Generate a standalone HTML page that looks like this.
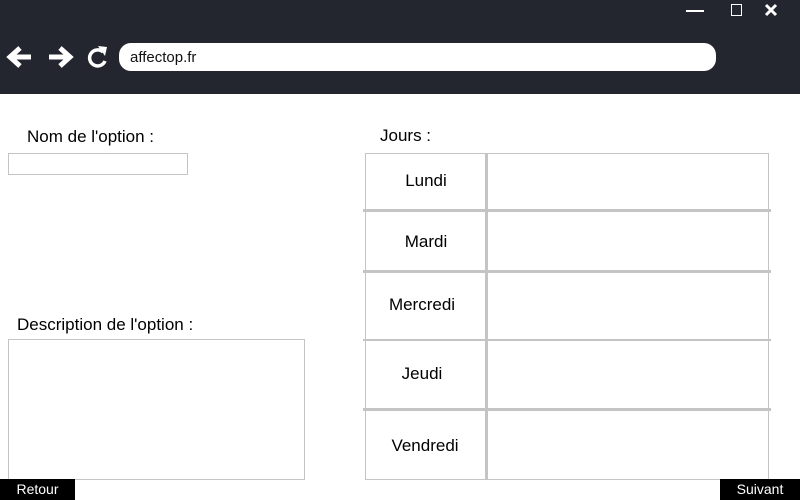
<!DOCTYPE html>
<html><head><style>
*{margin:0;padding:0;box-sizing:border-box}
body{width:800px;height:500px;position:relative;background:#fff;font-family:"Liberation Sans",sans-serif;overflow:hidden;color:#000}
.hd{position:absolute;left:0;top:0;width:800px;height:94px;background:#23262f}
.a{position:absolute}
.url{left:119px;top:43px;width:597px;height:28px;background:#fff;border-radius:12px;font-size:15px;line-height:30px;padding-left:11px;color:#111}
.lbl{font-size:17px}
.v{background:#c4c4c4}
.day{position:absolute;left:366px;width:120px;text-align:center;font-size:17px}
.btn{background:#000;color:#fff;font-size:14px;text-align:center;line-height:21px;height:21px;top:479px}
</style></head><body>
<div class="hd">
 <div class="a" style="left:686px;top:10px;width:18px;height:2px;background:#fff"></div>
 <div class="a" style="left:731px;top:4px;width:11px;height:12px;border:1.5px solid #fff"></div>
 <svg class="a" style="left:764px;top:3px" width="14" height="14"><path d="M2 2L12 12M12 2L2 12" stroke="#fff" stroke-width="3"/></svg>
 <svg class="a" style="left:5px;top:44px" width="30" height="26"><path d="M26 13H8M15 4L5 13L15 22" stroke="#fff" stroke-width="5" fill="none"/></svg>
 <svg class="a" style="left:45px;top:44px" width="30" height="26"><path d="M4 13H22M15 4L25 13L15 22" stroke="#fff" stroke-width="5" fill="none"/></svg>
 <svg class="a" style="left:86px;top:43px" width="24" height="28"><path d="M17 9A8 8 0 1 0 19 18" stroke="#fff" stroke-width="3.5" fill="none"/><path d="M12 3L21 4L19 13Z" fill="#fff"/></svg>
 <div class="a url">affectop.fr</div>
</div>
<div class="a lbl" style="left:27px;top:127px">Nom de l'option :</div>
<div class="a" style="left:8px;top:153px;width:180px;height:22px;border:1px solid #c4c4c4"></div>
<div class="a lbl" style="left:17px;top:315px">Description de l'option :</div>
<div class="a" style="left:8px;top:339px;width:297px;height:141px;border:1px solid #c4c4c4"></div>
<div class="a lbl" style="left:380px;top:126px">Jours :</div>
<div class="a" style="left:365px;top:153px;width:404px;height:327px;border:1px solid #c4c4c4"></div>
<div class="a v" style="left:485px;top:153px;width:3px;height:327px"></div>
<div class="a v" style="left:363px;top:209px;width:408px;height:3px"></div>
<div class="a v" style="left:363px;top:270px;width:408px;height:3px"></div>
<div class="a v" style="left:363px;top:339px;width:408px;height:2px"></div>
<div class="a v" style="left:363px;top:408px;width:408px;height:3px"></div>
<div class="day" style="top:171px">Lundi</div>
<div class="day" style="top:232px">Mardi</div>
<div class="day" style="top:295px;left:362px">Mercredi</div>
<div class="day" style="top:364px;left:362px">Jeudi</div>
<div class="day" style="top:436px;left:365px">Vendredi</div>
<div class="a btn" style="left:0;width:75px">Retour</div>
<div class="a btn" style="left:720px;width:80px">Suivant</div>
</body></html>
